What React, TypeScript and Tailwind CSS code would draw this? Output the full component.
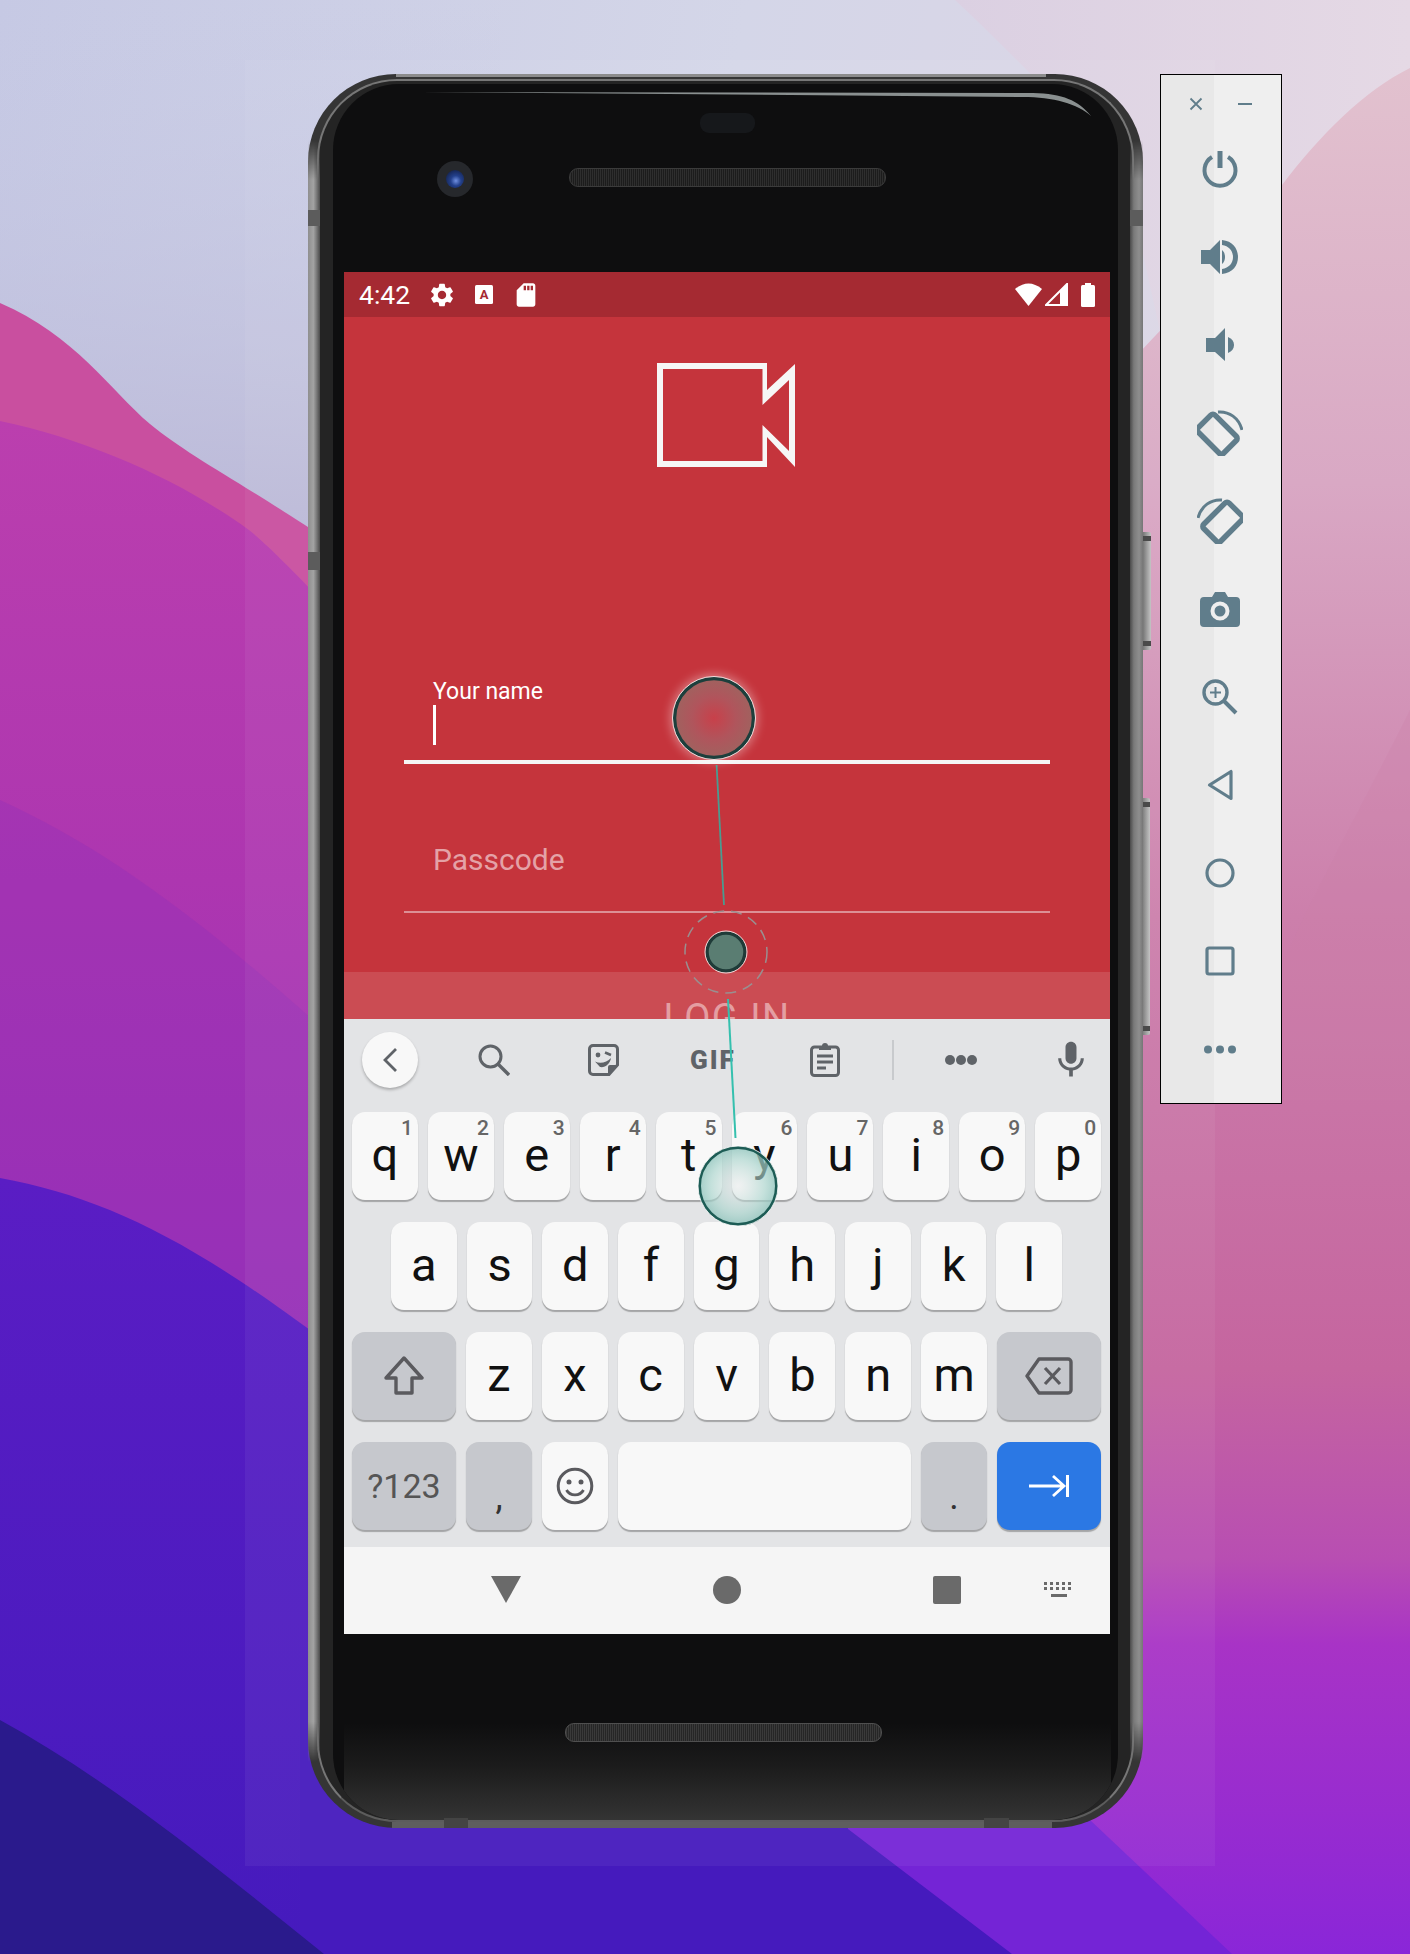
import React from "react";
import { MdSettings, MdSdCard, MdMic } from "react-icons/md";

const row1 = [["q","1"],["w","2"],["e","3"],["r","4"],["t","5"],["y","6"],["u","7"],["i","8"],["o","9"],["p","0"]];
const row2 = ["a","s","d","f","g","h","j","k","l"];
const row3 = ["z","x","c","v","b","n","m"];

function Key({ label, hint, className = "" }: { label?: React.ReactNode; hint?: string; className?: string }) {
  return (
    <div className={"relative flex h-[88px] items-center justify-center rounded-[13px] bg-[#f8f8f8] pb-[4px] text-[47px] leading-none text-[#111] shadow-[0_1.5px_1px_rgba(0,0,0,0.28)] " + className}>
      {hint && <span className="absolute right-[5px] top-[5px] text-[21px] font-medium leading-[22px] text-[#666]">{hint}</span>}
      {label}
    </div>
  );
}

function Ico({ w, h, children, className = "" }: { w: number; h: number; children: React.ReactNode; className?: string }) {
  return <svg width={w} height={h} viewBox={`0 0 ${w} ${h}`} className={className}>{children}</svg>;
}

function Wallpaper() {
  return (
    <svg className="absolute inset-0" width="1410" height="1954" viewBox="0 0 1410 1954">
      <defs>
        <linearGradient id="sky" x1="0" y1="0" x2="1" y2="0.25">
          <stop offset="0" stopColor="#c6c9e4" />
          <stop offset="0.5" stopColor="#d4d6e8" />
          <stop offset="1" stopColor="#e0d6e4" />
        </linearGradient>
        <linearGradient id="sky2" x1="0" y1="0" x2="0" y2="1">
          <stop offset="0" stopColor="#c6c9e4" stopOpacity="0" />
          <stop offset="1" stopColor="#b9b6d6" stopOpacity="1" />
        </linearGradient>
        <linearGradient id="pale" x1="0" y1="0" x2="1" y2="0">
          <stop offset="0" stopColor="#dbd0e2" />
          <stop offset="1" stopColor="#e5d9e5" />
        </linearGradient>
        <linearGradient id="pink" gradientUnits="userSpaceOnUse" x1="0" y1="68" x2="0" y2="1954">
          <stop offset="0" stopColor="#e2c2cf" />
          <stop offset="0.22" stopColor="#d9a8c4" />
          <stop offset="0.45" stopColor="#cc7fab" />
          <stop offset="0.69" stopColor="#c5659f" />
          <stop offset="0.79" stopColor="#b84eb2" />
          <stop offset="0.836" stopColor="#a833c6" />
          <stop offset="1" stopColor="#8a26d8" />
        </linearGradient>
        <linearGradient id="mag" x1="0" y1="0" x2="0" y2="1">
          <stop offset="0" stopColor="#bb3fae" />
          <stop offset="0.3" stopColor="#ad36b0" />
          <stop offset="0.6" stopColor="#9a30b8" />
          <stop offset="1" stopColor="#8a2fb8" />
        </linearGradient>
        <linearGradient id="blue" x1="0" y1="0" x2="0" y2="1">
          <stop offset="0" stopColor="#5a1dc4" />
          <stop offset="1" stopColor="#451abd" />
        </linearGradient>
      </defs>
      <rect width="1410" height="1954" fill="url(#sky)" />
      <rect width="500" height="560" fill="url(#sky2)" />
      <path d="M955,0 C1010,50 1060,110 1120,150 L1160,331 L1410,68 L1410,0 Z" fill="url(#pale)" />
      <path d="M600,500 L1140,352 C1190,300 1240,240 1282,185 C1320,135 1365,90 1410,68 L1410,1954 L600,1954 Z" fill="url(#pink)" />
      <path d="M1284,960 C1320,880 1360,810 1410,710 L1410,1100 L1284,1100 Z" fill="#cc7ea9" opacity="0.25" />
      <path d="M0,303 C75,335 110,390 150,424 C200,465 260,490 400,590 L400,1954 L0,1954 Z" fill="#c94f9f" />
      <path d="M0,421 C90,440 180,480 249,530 C280,555 310,590 400,680 L400,1954 L0,1954 Z" fill="url(#mag)" />
      <path d="M0,800 C110,850 220,930 400,1100 L400,1500 L0,1500 Z" fill="#8a2fb8" opacity="0.3" />
      <path d="M0,1178 C120,1200 220,1255 400,1400 L400,1954 L0,1954 Z" fill="url(#blue)" />
      <path d="M700,1790 L1090,1820 L1232,1954 L700,1954 Z" fill="#7424d6" />
      <path d="M300,1700 H848 V1829 L1012,1954 H300 Z" fill="#451abd" />
      <path d="M0,1720 C110,1780 220,1870 324,1954 L0,1954 Z" fill="#2a1a8c" />
      <rect x="245" y="60" width="970" height="1806" fill="#ffffff" opacity="0.05" />
    </svg>
  );
}

function SideButton({ className }: { className: string }) {
  return (
    <div className={"absolute flex w-[8px] flex-col justify-between rounded-r-[2px] bg-[linear-gradient(90deg,#777,#9e9e9e,#c4c4c4)] py-[4px] " + className}>
      <div className="h-[5px] bg-[#4a4a4a]" />
      <div className="h-[5px] bg-[#4a4a4a]" />
    </div>
  );
}

function Phone() {
  return (
    <div className="absolute left-[308px] top-[74px] h-[1754px] w-[835px]">
      <SideButton className="left-[835px] top-[458px] h-[118px]" />
      <SideButton className="left-[834px] top-[724px] h-[237px]" />
      <div className="relative h-full w-full rounded-[88px] bg-[#353535] px-[9px] pb-[6px] pt-[5px]">
        <div className="h-full rounded-[80px] border-2 border-[#777] border-b-[#5c5c5c] bg-[#242424] px-[14px] pt-[3px]">
          <div className="relative flex h-full flex-col overflow-hidden rounded-[66px] bg-[#0e0e0f] pl-[11px] pr-[7px]">
            <svg className="absolute left-0 top-0" width="784" height="60" viewBox="0 0 784 60">
              <path d="M88,8 L700,9 C730,10 745,16 758,32 C745,20 720,13 690,13 Z" fill="#8a9090" />
            </svg>
            <div className="flex h-[188px] flex-col items-center">
              <div className="mt-[29px] h-[20px] w-[55px] rounded-[9px] bg-[#16181b]" />
              <div className="relative mt-[35px] h-[19px] w-[317px] rounded-[9px] border border-[#3b3b3b] bg-[repeating-linear-gradient(90deg,#2e2e2e_0_1px,#1c1c1c_1px_2px)]">
                <div className="absolute left-[-133px] top-[-8px] flex h-[36px] w-[36px] items-center justify-center rounded-full bg-[#26282c]">
                  <div className="h-[18px] w-[18px] rounded-full bg-[radial-gradient(circle_at_55%_60%,#6f8fe0_0%,#23408c_35%,#0d1530_100%)]" />
                </div>
              </div>
            </div>
            <Screen />
            <div className="flex flex-1 flex-col items-center bg-[linear-gradient(180deg,#0e0e0f_0%,#0e0e0f_48%,#1c1c1c_72%,#343434_100%)]">
              <div className="mt-[89px] h-[19px] w-[317px] -translate-x-[4px] rounded-[9px] border border-[#4f4f4f] bg-[repeating-linear-gradient(90deg,#3a3a3a_0_1px,#262626_1px_2px)]" />
            </div>
          </div>
        </div>
      </div>
      <div className="absolute left-0 top-[66px] h-[1622px] w-[12px] bg-[linear-gradient(90deg,#8f8f8f_0%,#a3a3a3_45%,#7c7c7c_70%,#4a4a4a_100%)] [mask-image:linear-gradient(180deg,transparent,#000_40px,#000_calc(100%-40px),transparent)]">
        <div className="mt-[70px] h-[16px] bg-[#5c5c5c]" />
        <div className="mt-[326px] h-[18px] bg-[#5c5c5c]" />
      </div>
      <div className="absolute right-0 top-[66px] h-[1622px] w-[13px] bg-[linear-gradient(90deg,#4a4a4a_0%,#7a7a7a_30%,#8e8e8e_70%,#767676_100%)] [mask-image:linear-gradient(180deg,transparent,#000_40px,#000_calc(100%-40px),transparent)]">
        <div className="mt-[70px] h-[16px] bg-[#5c5c5c]" />
      </div>
      <div className="absolute left-[88px] top-0 h-[3px] w-[650px] bg-[#8c8c8c]" />
      <div className="absolute bottom-0 left-[84px] h-[6px] w-[660px] bg-[#5e5e5e]" />
      <div className="absolute bottom-0 left-[136px] h-[10px] w-[24px] bg-[#444]" />
      <div className="absolute bottom-0 left-[676px] h-[10px] w-[25px] bg-[#444]" />
    </div>
  );
}

function Screen() {
  return (
    <div className="flex h-[1362px] w-[766px] shrink-0 flex-col bg-[#c5343c]">
      <div className="flex h-[45px] items-center bg-[#a52a32] pl-[15px] pr-[15px] text-white">
        <span className="text-[26.5px] leading-[45px]">4:42</span>
        <MdSettings size={28} className="ml-[18px]" />
        <Ico w={18} h={19} className="ml-[19px]">
          <rect width="18" height="19" rx="1.5" fill="#fff" />
          <text x="9" y="13.5" fontSize="13" fontWeight="700" textAnchor="middle" fill="#a52a32">A</text>
        </Ico>
        <MdSdCard size={28} className="ml-[19px]" />
        <div className="flex-1" />
        <Ico w={27} h={23}><path d="M0,6 Q13.5,-5 27,6 L13.5,23 Z" fill="#fff" /></Ico>
        <Ico w={23} h={23} className="ml-[3px]">
          <path d="M1,22 L22,1 L22,22 Z" fill="none" stroke="#fff" strokeWidth="2" />
          <path d="M15,8 L22,1 L22,22 L15,22 Z" fill="#fff" />
        </Ico>
        <Ico w={14} h={24} className="ml-[13px]">
          <rect x="4" width="6" height="3" fill="#fff" /><rect y="2" width="14" height="22" rx="1.5" fill="#fff" />
        </Ico>
      </div>
      <div className="flex h-[655px] flex-col px-[60px] pt-[46px]">
        <svg className="mx-auto shrink-0 -translate-x-[1px]" width="138" height="104" viewBox="0 0 138 104">
          <path fillRule="evenodd" fill="#f6f6f6" d="M0,0 H110 V27 L138,1 V104 L110,74 V104 H0 Z M6,6 V98 H105.5 V62 L132,88 V17 L105.5,42 V6 Z" />
        </svg>
        <div className="mt-[213px] pl-[29px] text-[23px] leading-[24px] text-white">Your name</div>
        <div className="ml-[29px] mt-[1px] h-[40px] w-[3px] bg-white" />
        <div className="mt-[15px] h-[3.5px] bg-[#f5f5f5]" />
        <div className="mt-[78px] pl-[29px] text-[30px] leading-[36px] text-[#e4a2a7]">Passcode</div>
        <div className="mt-[33px] h-[2px] bg-[#dc9096]" />
      </div>
      <div className="flex h-[47px] justify-center overflow-hidden bg-[#cb4c53] pt-[24px] text-[38px] leading-[44px] tracking-[1.5px] text-[#e49ea2]">LOG IN</div>
      <Keyboard />
      <div className="flex h-[87px] items-center bg-[#f5f5f5] pb-[2px]">
        <Ico w={30} h={27} className="ml-[147px]"><path d="M0,0 H30 L15,27 Z" fill="#6a6a6a" /></Ico>
        <div className="ml-[192px] h-[28px] w-[28px] rounded-full bg-[#6a6a6a]" />
        <div className="ml-[192px] h-[28px] w-[28px] rounded-[2px] bg-[#6a6a6a]" />
        <Ico w={30} h={16} className="ml-[83px]">
          <g fill="#6a6a6a">
            {[0,6,12,18,24].map((x) => <rect key={"a"+x} x={x} y="0" width="3" height="3" />)}
            {[0,6,12,18,24].map((x) => <rect key={"b"+x} x={x} y="5" width="3" height="3" />)}
            <rect x="7" y="12" width="16" height="3" />
          </g>
        </Ico>
      </div>
    </div>
  );
}

function Keyboard() {
  return (
    <div className="flex h-[528px] flex-col bg-[#e3e4e6] pl-[8px] pr-[9px] pb-[17px] text-[#5f6368]">
      <div className="-ml-[8px] -mr-[9px] flex h-[93px] shrink-0 items-center pb-[12px]">
        <div className="ml-[18px] flex h-[56px] w-[56px] items-center justify-center rounded-full bg-[#f8f8f8] shadow-[0_2px_3px_rgba(0,0,0,0.25)]">
          <Ico w={16} h={26}><path d="M14,2 L3,13 L14,24" fill="none" stroke="#5f6368" strokeWidth="2.8" /></Ico>
        </div>
        <Ico w={32} h={32} className="ml-[60px]">
          <circle cx="12.5" cy="12.5" r="10.5" fill="none" stroke="#5f6368" strokeWidth="3" /><path d="M20,20 L31,31" stroke="#5f6368" strokeWidth="3.4" />
        </Ico>
        <Ico w={31} h={32} className="ml-[78px]">
          <path d="M5,1.5 H26 A3.5,3.5 0 0 1 29.5,5 V21 L21,30.5 H5 A3.5,3.5 0 0 1 1.5,27 V5 A3.5,3.5 0 0 1 5,1.5 Z" fill="none" stroke="#5f6368" strokeWidth="3" />
          <path d="M29,21 H22 A2,2 0 0 0 20,23 V30 Z" fill="#5f6368" />
          <circle cx="10" cy="11" r="2.4" fill="#5f6368" /><path d="M17,8.5 L23,11" stroke="#5f6368" strokeWidth="2.6" />
          <path d="M7,17.5 C12,20 19,18.5 23,14 C22,20 17,24 12,23 Z" fill="#5f6368" />
        </Ico>
        <span className="ml-[71px] w-[48px] text-[26px] font-black leading-none tracking-[2px] text-[#5f6368]">GIF</span>
        <Ico w={30} h={35} className="ml-[71.5px]">
          <rect x="1.5" y="5" width="27" height="28.5" rx="3" fill="none" stroke="#5f6368" strokeWidth="3" />
          <path d="M9,8 V4 H12 A3,3 0 0 1 18,4 H21 V8 Z" fill="#5f6368" />
          <path d="M7,14 H23 M7,20 H23 M7,26 H16" stroke="#5f6368" strokeWidth="2.8" />
        </Ico>
        <div className="ml-[52px] h-[40px] w-[2px] bg-[#c8cacd]" />
        <div className="ml-[51px] flex gap-[1px]">
          <div className="h-[10px] w-[10px] rounded-full bg-[#5f6368]" /><div className="h-[10px] w-[10px] rounded-full bg-[#5f6368]" /><div className="h-[10px] w-[10px] rounded-full bg-[#5f6368]" />
        </div>
        <MdMic size={44} className="ml-[72px] shrink-0" />
      </div>
      <div className="flex gap-[10px]">
        {row1.map(([l, n]) => <Key key={l} label={l} hint={n} className="flex-1" />)}
      </div>
      <div className="mt-[22px] flex gap-[10px] px-[39px]">
        {row2.map((l) => <Key key={l} label={l} className="flex-1" />)}
      </div>
      <div className="mt-[22px] flex gap-[10px]">
        <Key className="w-[104px] !bg-[#c6c8cd] !pb-0" label={
          <Ico w={42} h={40}><path d="M21,2 L39,22 H29 V37 H13 V22 H3 Z" fill="none" stroke="#5a5a5e" strokeWidth="3.4" strokeLinejoin="round" /></Ico>
        } />
        {row3.map((l) => <Key key={l} label={l} className="flex-1" />)}
        <Key className="w-[104px] !bg-[#c6c8cd] !pb-0" label={
          <Ico w={48} h={38}><path d="M14,2 H43 A3,3 0 0 1 46,5 V33 A3,3 0 0 1 43,36 H14 L2,19 Z" fill="none" stroke="#5a5a5e" strokeWidth="3.4" strokeLinejoin="round" /><path d="M20,11 L35,27 M35,11 L20,27" stroke="#5a5a5e" strokeWidth="3.2" /></Ico>
        } />
      </div>
      <div className="mt-[22px] flex gap-[10px]">
        <Key className="w-[104px] !bg-[#c6c8cd] !pb-0 !text-[34px] !text-[#555]" label="?123" />
        <Key className="w-[66px] shrink-0 !bg-[#c6c8cd] !text-[#333]" label={<span className="mt-[26px] text-[36px]">,</span>} />
        <Key className="w-[66px] shrink-0 !pb-0" label={
          <Ico w={38} h={38}><circle cx="19" cy="19" r="16.8" fill="none" stroke="#5a5a5e" strokeWidth="3" /><circle cx="13" cy="15" r="2.5" fill="#5a5a5e" /><circle cx="25" cy="15" r="2.5" fill="#5a5a5e" /><path d="M10.5,23 C14,29.5 24,29.5 27.5,23" fill="none" stroke="#5a5a5e" strokeWidth="2.8" /></Ico>
        } />
        <Key className="flex-1" />
        <Key className="w-[66px] shrink-0 !bg-[#c6c8cd] !text-[#333]" label={<span className="mt-[26px] text-[36px]">.</span>} />
        <Key className="w-[104px] !bg-[#2b78e4] !pb-0" label={
          <Ico w={40} h={24}><path d="M0,12 H35 M24,2 L35,12 L24,22" fill="none" stroke="#fff" strokeWidth="2.8" /><path d="M38.5,1 V23" stroke="#fff" strokeWidth="3" /></Ico>
        } />
      </div>
    </div>
  );
}

function Touches() {
  return (
    <svg className="absolute inset-0" width="1410" height="1954" viewBox="0 0 1410 1954">
      <defs>
        <radialGradient id="t1">
          <stop offset="0" stopColor="#c8404a" />
          <stop offset="0.55" stopColor="#b0555c" />
          <stop offset="1" stopColor="#a0625f" />
        </radialGradient>
        <radialGradient id="t3">
          <stop offset="0" stopColor="#e4e8e8" stopOpacity="0.4" />
          <stop offset="0.7" stopColor="#a8d4cc" stopOpacity="0.65" />
          <stop offset="1" stopColor="#8fc4bc" stopOpacity="0.8" />
        </radialGradient>
        <filter id="blur1" x="-50%" y="-50%" width="200%" height="200%"><feGaussianBlur stdDeviation="5" /></filter>
      </defs>
      <line x1="716.6" y1="765" x2="724" y2="905" stroke="#4a9c90" strokeWidth="1.8" />
      <line x1="728" y1="999" x2="735.5" y2="1138" stroke="#35c0ae" strokeWidth="2" />
      <circle cx="714" cy="718" r="44" fill="#ffffff" opacity="0.35" filter="url(#blur1)" />
      <circle cx="714" cy="718" r="39.5" fill="url(#t1)" stroke="#1d3f3c" strokeWidth="3.5" />
      <circle cx="714" cy="718" r="41.5" fill="none" stroke="#f0dcdc" strokeWidth="1" />
      <circle cx="726" cy="952" r="41" fill="none" stroke="#9a8f90" strokeWidth="1.5" strokeDasharray="11 7" />
      <circle cx="726" cy="952" r="19" fill="#5a7d72" stroke="#1f3b38" strokeWidth="3.5" />
      <circle cx="726" cy="952" r="21" fill="none" stroke="#f0dcdc" strokeWidth="1" />
      <circle cx="738" cy="1186" r="38.5" fill="url(#t3)" stroke="#1d5c55" strokeWidth="3" />
      <circle cx="738" cy="1186" r="40" fill="none" stroke="#ffffff" strokeWidth="1" opacity="0.8" />
    </svg>
  );
}

function Panel() {
  const c = "#607d8b";
  const rows: React.ReactNode[] = [
    <Ico w={38} h={38} key="p"><path d="M11,7 A15.5,15.5 0 1 0 27,7" fill="none" stroke={c} strokeWidth="4" /><path d="M19,1 V18" stroke={c} strokeWidth="5" /></Ico>,
    <Ico w={38} h={36} key="vu"><path d="M0,11 H9 L19,1 V35 L9,25 H0 Z" fill={c} /><path d="M21,11 C25,14 25,22 21,25 Z" fill={c} /><path d="M21,1 C32,2 37,10 37,18 C37,26 32,34 21,35 V30 C28,29 32,24 32,18 C32,12 28,7 21,6 Z" fill={c} /></Ico>,
    <Ico w={29} h={34} key="vd"><path d="M0,10 H9 L19,0 V33 L9,24 H0 Z" fill={c} /><path d="M22,9 C30,12 30,22 22,25 Z" fill={c} /></Ico>,
    <Ico w={46} h={46} key="rl">
      <rect x="11" y="9" width="24" height="36" rx="3" transform="rotate(-45 23 27) translate(0 -4)" fill="none" stroke={c} strokeWidth="5.5" />
      <path d="M21,2 C32,1 42,8 45,20" fill="none" stroke={c} strokeWidth="3" />
    </Ico>,
    <Ico w={46} h={46} key="rr">
      <rect x="11" y="9" width="24" height="36" rx="3" transform="rotate(45 23 27) translate(0 -4)" fill="none" stroke={c} strokeWidth="5.5" />
      <path d="M25,2 C14,1 4,8 1,20" fill="none" stroke={c} strokeWidth="3" />
    </Ico>,
    <Ico w={40} h={35} key="cam"><path d="M12,5 L15,0 H25 L28,5 H36 A4,4 0 0 1 40,9 V31 A4,4 0 0 1 36,35 H4 A4,4 0 0 1 0,31 V9 A4,4 0 0 1 4,5 Z" fill={c} /><circle cx="20" cy="19" r="7.5" fill={c} stroke="#eee" strokeWidth="4" /></Ico>,
    <Ico w={36} h={36} key="z"><circle cx="13.5" cy="13.5" r="11.5" fill="none" stroke={c} strokeWidth="3.4" /><path d="M21.5,21.5 L34,34" stroke={c} strokeWidth="4" /><path d="M8,13.5 H19 M13.5,8 V19" stroke={c} strokeWidth="2" /></Ico>,
    <Ico w={26} h={32} key="b"><path d="M24,2.5 V29.5 L2.5,16 Z" fill="none" stroke={c} strokeWidth="3.2" strokeLinejoin="round" /></Ico>,
    <Ico w={30} h={30} key="h"><circle cx="15" cy="15" r="13" fill="none" stroke={c} strokeWidth="3.2" /></Ico>,
    <Ico w={30} h={30} key="r"><rect x="2" y="2" width="26" height="26" rx="2" fill="none" stroke={c} strokeWidth="3.2" /></Ico>,
    <Ico w={32} h={9} key="d"><circle cx="4" cy="4.5" r="4" fill={c} /><circle cx="16" cy="4.5" r="4" fill={c} /><circle cx="28" cy="4.5" r="4" fill={c} /></Ico>,
  ];
  return (
    <div className="absolute left-[1160px] top-[74px] flex h-[1030px] w-[122px] flex-col border border-black bg-[linear-gradient(90deg,#e8e8e8_0%,#e8e8e8_44%,#efefef_44%,#efefef_100%)]">
      <div className="flex h-[50px] shrink-0 items-center justify-between pl-[28px] pr-[29px] pt-[8px]">
        <Ico w={14} h={14}><path d="M1.5,1.5 L12.5,12.5 M12.5,1.5 L1.5,12.5" stroke={c} strokeWidth="1.8" /></Ico>
        <Ico w={14} h={2}><path d="M0,1 H14" stroke={c} strokeWidth="2" /></Ico>
      </div>
      {rows.map((r, i) => (
        <div key={i} className="flex h-[88px] shrink-0 items-center justify-center pr-[2px]">{r}</div>
      ))}
    </div>
  );
}

export default function App() {
  return (
    <div className="relative h-[1954px] w-[1410px] overflow-hidden [font-family:Roboto,sans-serif]">
      <Wallpaper />
      <Phone />
      <Touches />
      <Panel />
    </div>
  );
}
